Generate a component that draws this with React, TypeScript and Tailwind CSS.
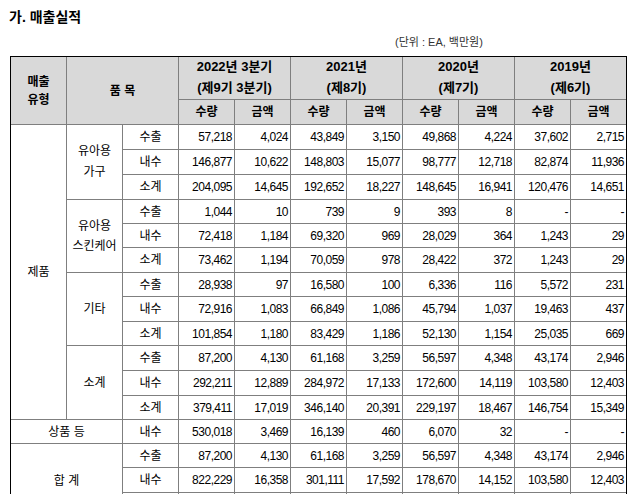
import React from 'react';

// rows of figures: [수량, 금액] x 2022 3Q, 2021, 2020, 2019
type Row = { kind: string; values: string[] };
type Group = { label: string[]; leading: string; rows: Row[] };

const PRODUCT_GROUPS: Group[] = [
  {
    label: ['유아용', '가구'],
    leading: 'leading-[21px]',
    rows: [
      { kind: '수출', values: ['57,218', '4,024', '43,849', '3,150', '49,868', '4,224', '37,602', '2,715'] },
      { kind: '내수', values: ['146,877', '10,622', '148,803', '15,077', '98,777', '12,718', '82,874', '11,936'] },
      { kind: '소계', values: ['204,095', '14,645', '192,652', '18,227', '148,645', '16,941', '120,476', '14,651'] },
    ],
  },
  {
    label: ['유아용', '스킨케어'],
    leading: 'leading-[20px]',
    rows: [
      { kind: '수출', values: ['1,044', '10', '739', '9', '393', '8', '-', '-'] },
      { kind: '내수', values: ['72,418', '1,184', '69,320', '969', '28,029', '364', '1,243', '29'] },
      { kind: '소계', values: ['73,462', '1,194', '70,059', '978', '28,422', '372', '1,243', '29'] },
    ],
  },
  {
    label: ['기타'],
    leading: 'leading-[20px]',
    rows: [
      { kind: '수출', values: ['28,938', '97', '16,580', '100', '6,336', '116', '5,572', '231'] },
      { kind: '내수', values: ['72,916', '1,083', '66,849', '1,086', '45,794', '1,037', '19,463', '437'] },
      { kind: '소계', values: ['101,854', '1,180', '83,429', '1,186', '52,130', '1,154', '25,035', '669'] },
    ],
  },
  {
    label: ['소계'],
    leading: 'leading-[20px]',
    rows: [
      { kind: '수출', values: ['87,200', '4,130', '61,168', '3,259', '56,597', '4,348', '43,174', '2,946'] },
      { kind: '내수', values: ['292,211', '12,889', '284,972', '17,133', '172,600', '14,119', '103,580', '12,403'] },
      { kind: '소계', values: ['379,411', '17,019', '346,140', '20,391', '229,197', '18,467', '146,754', '15,349'] },
    ],
  },
];

const GOODS: Row = { kind: '내수', values: ['530,018', '3,469', '16,139', '460', '6,070', '32', '-', '-'] };

const TOTAL: Row[] = [
  { kind: '수출', values: ['87,200', '4,130', '61,168', '3,259', '56,597', '4,348', '43,174', '2,946'] },
  { kind: '내수', values: ['822,229', '16,358', '301,111', '17,592', '178,670', '14,152', '103,580', '12,403'] },
  { kind: '소계', values: ['909,429', '20,488', '362,279', '20,851', '235,267', '18,500', '146,754', '15,349'] },
];

const PERIODS = [
  ['2022년 3분기', '(제9기 3분기)'],
  ['2021년', '(제8기)'],
  ['2020년', '(제7기)'],
  ['2019년', '(제6기)'],
];

function Label({ children }: { children: React.ReactNode }) {
  return <div className="bg-white flex items-center justify-center">{children}</div>;
}

function Figures({ row }: { row: Row }) {
  return (
    <>
      <Label>{row.kind}</Label>
      {row.values.map((v, i) => (
        <div key={i} className="bg-white flex items-center justify-end pr-[2px] tracking-[-0.5px]">
          {v}
        </div>
      ))}
    </>
  );
}

export default function App() {
  return (
    <div
      className="w-[632px] h-[494px] overflow-hidden bg-white text-black text-[12px]"
      style={{ fontFamily: '"Liberation Sans", "Noto Sans CJK KR", sans-serif' }}
    >
      <div className="h-[34px] leading-[34px] pl-[9px] text-[14px] font-bold">가. 매출실적</div>
      <div className="h-[22px] leading-[16px] pl-[395px] text-[11px] text-[#333]">(단위 : EA, 백만원)</div>

      <div className="ml-[10px] w-[617px] border border-black bg-[#7f7f7f] grid gap-px grid-cols-[repeat(11,55px)] grid-rows-[42px_24px_24px_24px_24px_23px_23px_24px_23px_24px_23px_24px_24px_23px_23px_23px_24px_24px]">
        {/* header */}
        <div className="row-span-2 bg-[#d9d9d9] flex flex-col items-center justify-center font-bold leading-[18px]">
          <span>매출</span>
          <span>유형</span>
        </div>
        <div className="row-span-2 col-span-2 bg-[#d9d9d9] flex items-center justify-center font-bold">품 목</div>
        {PERIODS.map((p) => (
          <div
            key={p[0]}
            className="col-span-2 bg-[#d9d9d9] flex flex-col items-center justify-center font-bold text-[13px] leading-[21px] pb-[2px]"
          >
            <span>{p[0]}</span>
            <span>{p[1]}</span>
          </div>
        ))}
        {PERIODS.map((p) => (
          <React.Fragment key={p[0] + 'sub'}>
            <div className="bg-[#d9d9d9] flex items-center justify-center font-bold">수량</div>
            <div className="bg-[#d9d9d9] flex items-center justify-center font-bold">금액</div>
          </React.Fragment>
        ))}

        {/* 제품 */}
        <div className="row-span-12 bg-white flex items-center justify-center">제품</div>
        {PRODUCT_GROUPS.map((g) => (
          <React.Fragment key={g.label.join('')}>
            {g.rows.map((r, i) => (
              <React.Fragment key={r.kind}>
                {i === 0 && (
                  <div className={`row-span-3 bg-white flex flex-col items-center justify-center ${g.leading}`}>
                    {g.label.map((l) => (
                      <span key={l}>{l}</span>
                    ))}
                  </div>
                )}
                <Figures row={r} />
              </React.Fragment>
            ))}
          </React.Fragment>
        ))}

        {/* 상품 등 */}
        <div className="col-span-2 bg-white flex items-center justify-center">상품 등</div>
        <Figures row={GOODS} />

        {/* 합계 */}
        <div className="col-span-2 row-span-3 bg-white flex items-center justify-center">합 계</div>
        {TOTAL.map((r) => (
          <Figures key={r.kind} row={r} />
        ))}
      </div>
    </div>
  );
}
